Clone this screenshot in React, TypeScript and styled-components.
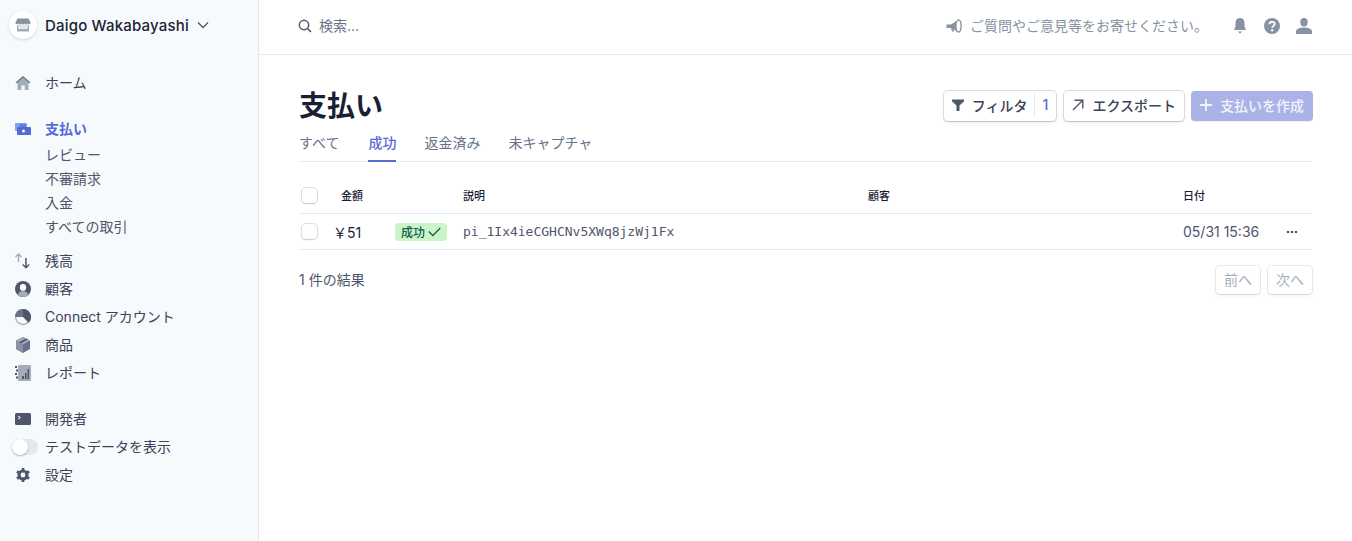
import React from "react";
import styled, { createGlobalStyle } from "styled-components";

const Global = createGlobalStyle`
  html, body { margin: 0; padding: 0; background: #fff; }
  body {
    font-family: Inter, "Noto Sans CJK JP", sans-serif;
    color: #3c4257;
    -webkit-font-smoothing: antialiased;
  }
  * { box-sizing: border-box; }
`;

const Page = styled.div`
  display: flex;
  width: 1352px;
  height: 541px;
  overflow: hidden;
`;

const Sidebar = styled.aside`
  width: 259px;
  flex: none;
  background: #f7fafc;
  border-right: 1px solid #e3e8ee;
  display: flex;
  flex-direction: column;
`;

const Account = styled.div`
  height: 50px;
  padding: 0 0 0 9px;
  display: flex;
  align-items: center;
  gap: 8px;
  font-size: 15px;
  font-weight: 500;
  letter-spacing: 0.18px;
  color: #1a1f36;
`;

const Avatar = styled.div`
  width: 28px;
  height: 28px;
  border-radius: 50%;
  background: #fff;
  box-shadow: 0 1px 3px rgba(60, 66, 87, 0.2);
  display: flex;
  align-items: center;
  justify-content: center;
`;

const Nav = styled.nav`
  display: flex;
  flex-direction: column;
  padding-top: 19px;
`;

const NavGroup = styled.div<{ $gap: number }>`
  display: flex;
  flex-direction: column;
  margin-bottom: ${(p) => p.$gap}px;
`;

const NavRow = styled.div<{ $active?: boolean }>`
  height: 28px;
  display: flex;
  align-items: center;
  font-size: 14px;
  line-height: 20px;
  font-weight: ${(p) => (p.$active ? 600 : 400)};
  color: ${(p) => (p.$active ? "#556cd6" : "#3c4257")};
`;

const IconSlot = styled.span`
  width: 45px;
  flex: none;
  padding-left: 15px;
  display: flex;
  align-items: center;
`;

const SubRow = styled.div`
  height: 24px;
  padding: 0 0 2px 45px;
  display: flex;
  align-items: center;
  font-size: 14px;
  color: #4f566b;
`;

const Toggle = styled.span`
  width: 26px;
  height: 16px;
  margin-left: 12px;
  margin-right: 7px;
  border-radius: 8px;
  background: #e3e8ee;
  position: relative;
  flex: none;
  &::before {
    content: "";
    position: absolute;
    left: 0;
    top: 0;
    width: 16px;
    height: 16px;
    border-radius: 50%;
    background: #fff;
    box-shadow: 0 1px 2px rgba(60, 66, 87, 0.4);
  }
`;

const Main = styled.main`
  flex: 1;
  min-width: 0;
  display: flex;
  flex-direction: column;
`;

const Topbar = styled.header`
  height: 55px;
  flex: none;
  border-bottom: 1px solid #e3e8ee;
  padding: 0 40px 2px 39px;
  display: flex;
  align-items: center;
  font-size: 14px;
  color: #697386;
`;

const Search = styled.div`
  display: flex;
  align-items: center;
  gap: 7px;
  flex: 1;
  color: #697386;
`;

const SearchText = styled.span`
  margin-bottom: 3px;
`;

const Feedback = styled.div`
  display: flex;
  align-items: center;
  gap: 8px;
  color: #8792a2;
  margin-right: 24px;
`;

const FeedbackText = styled.span`
  margin-bottom: 2px;
`;

const TopIcons = styled.div`
  display: flex;
  align-items: center;
  gap: 16px;
`;

const Content = styled.div`
  padding: 0 40px 0 40px;
  display: flex;
  flex-direction: column;
`;

const TitleRow = styled.div`
  display: flex;
  justify-content: space-between;
  align-items: flex-start;
  padding-top: 36px;
  height: 75px;
`;

const Title = styled.h1`
  margin: 0;
  font-size: 28px;
  line-height: 30px;
  font-weight: 700;
  color: #1a1f36;
`;

const Actions = styled.div`
  display: flex;
  gap: 7px;
  margin-right: -1px;
`;

const Button = styled.button<{ $primary?: boolean }>`
  height: 30px;
  padding: 0 ${(p) => (p.$primary ? 9 : 8)}px 2px;
  display: flex;
  align-items: center;
  gap: 8px;
  border: none;
  border-radius: 4px;
  font-family: inherit;
  font-size: 14px;
  font-weight: 500;
  background: ${(p) => (p.$primary ? "#a9b3e8" : "#fff")};
  color: ${(p) => (p.$primary ? "#f2f4fc" : "#3c4257")};
  box-shadow: ${(p) =>
    p.$primary
      ? "0 1px 1px rgba(0,0,0,.06)"
      : "0 0 0 1px rgba(60,66,87,.16), 0 1px 1px rgba(0,0,0,.1), 0 2px 5px rgba(60,66,87,.08)"};
  &:first-child {
    margin-right: 1px;
  }
`;

const FilterCount = styled.span`
  width: 14px;
  border-left: 1px solid #e3e8ee;
  padding-left: 7px;
  margin-left: -1px;
  color: #556cd6;
  line-height: 22px;
`;

const Tabs = styled.div`
  display: flex;
  gap: 28px;
  height: 32px;
  border-bottom: 1px solid #e3e8ee;
`;

const Tab = styled.div<{ $active?: boolean }>`
  height: 32px;
  line-height: 25px;
  font-size: 14px;
  font-weight: ${(p) => (p.$active ? 500 : 400)};
  color: ${(p) => (p.$active ? "#556cd6" : "#697386")};
  border-bottom: 2px solid ${(p) => (p.$active ? "#556cd6" : "transparent")};
  &:first-child {
    margin-right: 1px;
  }
`;

const Grid = `
  display: grid;
  grid-template-columns: 37px 59px 68px 405px 315px 1fr;
  align-items: center;
`;

const HeadRow = styled.div`
  ${Grid}
  height: 52px;
  padding-top: 15px;
  border-bottom: 1px solid #e3e8ee;
  font-size: 11px;
  font-weight: 500;
  color: #1a1f36;
`;

const BodyRow = styled.div`
  ${Grid}
  height: 36px;
  border-bottom: 1px solid #e3e8ee;
  font-size: 14px;
  color: #4f566b;
`;

const Check = styled.span`
  display: block;
  width: 15px;
  height: 15px;
  margin-left: 3px;
  border-radius: 4px;
  background: #fff;
  box-shadow: 0 0 0 1px rgba(60, 66, 87, 0.16), 0 1px 2px rgba(60, 66, 87, 0.16);
`;

const Amount = styled.span<{ $head?: boolean }>`
  margin-left: ${(p) => (p.$head ? 5 : -3)}px;
  color: #1a1f36;
  font-weight: ${(p) => (p.$head ? 500 : 400)};
  display: flex;
  align-items: center;
`;

const Badge = styled.span`
  display: inline-flex;
  align-items: center;
  gap: 3px;
  width: 52px;
  height: 18px;
  padding-left: 6px;
  border-radius: 4px;
  background: #cbf4c9;
  color: #0e6245;
  font-size: 12px;
  font-weight: 500;
`;

const Mono = styled.span`
  font-family: "DejaVu Sans Mono", "Liberation Mono", monospace;
  font-size: 13px;
  color: #4f566b;
`;

const DateCell = styled.span`
  display: flex;
  align-items: center;
  justify-content: space-between;
  padding-right: 14px;
`;

const Footer = styled.div`
  display: flex;
  align-items: center;
  justify-content: space-between;
  padding-top: 16px;
  font-size: 14px;
  color: #4f566b;
`;

const ResultCount = styled.span`
  margin-bottom: 2px;
`;

const Pager = styled.div`
  display: flex;
  gap: 8px;
`;

const PageButton = styled.button`
  height: 28px;
  padding: 0 8px 2px;
  border: none;
  border-radius: 4px;
  background: #fff;
  font-family: inherit;
  font-size: 14px;
  color: #a3acb9;
  box-shadow: 0 0 0 1px rgba(60, 66, 87, 0.1), 0 1px 1px rgba(0, 0, 0, 0.06), 0 2px 4px rgba(60, 66, 87, 0.06);
`;

const Glyph = ({ children, w = 16, h = 16 }: { children: React.ReactNode; w?: number; h?: number }) => (
  <svg width={w} height={h} viewBox={`0 0 ${w} ${h}`} style={{ display: "block", flex: "none" }}>
    {children}
  </svg>
);

const grey = "#8792a2";
const dark = "#4f566b";
const soft = "#a3acb9";

const HomeIcon = () => (
  <Glyph>
    <path d="M2.500 7.500 8 3l5.500 4.500V15H9.700v-4.500H6.300V15H2.500z" fill={soft} />
    <path d="M8 1 0.500 7.500l.9 1L8 3l6.600 5.500.9-1z" fill="#697386" />
  </Glyph>
);
const PaymentsIcon = () => (
  <Glyph>
    <rect x="0" y="2" width="12" height="8" rx="0.800" fill="#7fa2f2" />
    <path d="M4.500 3h6.500v3H4.500z" fill="#5f7fe0" />
    <rect x="2" y="6" width="14" height="8" rx="0.800" fill="#5469d4" />
    <circle cx="8.500" cy="10" r="1.500" fill="#f7fafc" />
  </Glyph>
);
const BalanceIcon = () => (
  <Glyph>
    <path d="M4.500 1 8 4.600 7 5.500 5.200 3.700V10H3.800V3.700L2 5.500 1 4.600z" fill={soft} transform="translate(-1 -1)" />
    <path d="M10.200 5h1.500v8l2-2 1 1-3.700 3.700L7.300 12l1-1 1.900 2z" fill={dark} />
  </Glyph>
);
const CustomerIcon = () => (
  <Glyph>
    <circle cx="8" cy="8" r="8" fill={dark} />
    <path d="M2.600 13.800C3.400 11.300 5.400 10 8 10s4.600 1.300 5.400 3.800A8 8 0 0 1 8 16a8 8 0 0 1-5.400-2.200z" fill={soft} />
    <ellipse cx="8" cy="6.400" rx="3.200" ry="3.400" fill="#f7fafc" />
  </Glyph>
);
const ConnectIcon = () => (
  <Glyph>
    <circle cx="8" cy="8" r="7.400" fill="#f7fafc" stroke={soft} strokeWidth="1.200" />
    <path d="M8 0a8 8 0 0 1 5.600 13.700L8 8z" fill={dark} />
    <path d="M8 0v8H0a8 8 0 0 1 8-8z" fill="#697386" />
  </Glyph>
);
const ProductIcon = () => (
  <Glyph>
    <path d="M8 0 15 3.500V12L8 16 1 12V3.500z" fill="#697386" />
    <path d="M1 3.500 8 0l7 3.500L8 7.500z" fill={soft} />
    <path d="M1 3.500 8 7.500V16L1 12z" fill={grey} />
    <path d="M4 5.200 11 1.500l1.800.9L6 6.300z" fill={dark} />
  </Glyph>
);
const ReportIcon = () => (
  <Glyph>
    <rect x="3" y="0" width="13" height="16" rx="1" fill={soft} />
    <path d="M0 1h2v2H0zM1 4.500h2v2H1zM0 8h2v2H0zM1 11.500h2v2H1z" fill={dark} />
    <path d="M7 11h2v3H7zM10 8h1.500v6H10zM12.500 4H14v10h-1.500z" fill={dark} />
  </Glyph>
);
const TerminalIcon = () => (
  <Glyph>
    <rect y="2" width="16" height="12" rx="1.500" fill={dark} />
    <path d="M3 5l2.500 1.500L3 8" fill="none" stroke="#f7fafc" strokeWidth="1" />
  </Glyph>
);
const GearIcon = () => (
  <Glyph>
    <circle cx="8" cy="8" r="4.200" fill="none" stroke={dark} strokeWidth="2.600" />
    <path d="M8 1v14M1.900 4.500l12.200 7M14.100 4.500l-12.200 7" stroke={dark} strokeWidth="2.600" />
    <circle cx="8" cy="8" r="2.400" fill="#f7fafc" />
  </Glyph>
);
const StoreIcon = () => (
  <Glyph>
    <path d="M2.500 1.500h11L15.500 5.500a1.500 1.500 0 0 1-3 .5 1.500 1.500 0 0 1-3 0 1.500 1.500 0 0 1-3 0 1.500 1.500 0 0 1-3 0 1.500 1.500 0 0 1-3-.5z" fill={grey} />
    <path d="M2 8h1.500v4h9V8H14v6.500H2z" fill={soft} />
    <path d="M3.500 8h9v4h-9z" fill="#e3e8ee" />
  </Glyph>
);
const Chevron = () => (
  <Glyph w={12} h={12}>
    <path d="M1 3.500 6 8.500 11 3.500" fill="none" stroke={dark} strokeWidth="1.300" />
  </Glyph>
);
const SearchIcon = () => (
  <Glyph w={14} h={14}>
    <circle cx="6" cy="6" r="4.700" fill="none" stroke={dark} strokeWidth="1.500" />
    <path d="M9.500 9.500 13 13" stroke={dark} strokeWidth="1.600" />
  </Glyph>
);
const Megaphone = () => (
  <Glyph>
    <path d="M0.500 6.500H5L12 2v12L7.500 11.200 8 13.500H6L5 10H.5z" fill={grey} />
    <ellipse cx="12.500" cy="8" rx="2.600" ry="6" fill="#fff" stroke={grey} strokeWidth="1.300" />
  </Glyph>
);
const BellIcon = () => (
  <Glyph>
    <path d="M8 0c3 0 4.500 2.300 4.500 5v3.500L14 12H2l1.500-3.500V5C3.500 2.300 5 0 8 0z" fill={grey} />
    <path d="M6 13.500h4L8 15.800z" fill={grey} />
  </Glyph>
);
const HelpIcon = () => (
  <Glyph>
    <circle cx="8" cy="8" r="8" fill={grey} />
    <path d="M5.400 6.200C5.500 4.600 6.600 3.800 8 3.800c1.500 0 2.700.9 2.700 2.200 0 1.900-2.400 1.900-2.400 3.700" fill="none" stroke="#fff" strokeWidth="1.800" />
    <circle cx="8.200" cy="12.200" r="1.200" fill="#fff" />
  </Glyph>
);
const UserIcon = () => (
  <Glyph>
    <ellipse cx="8" cy="4.200" rx="3.700" ry="4.200" fill={grey} />
    <path d="M0 16v-2.500C0 11 3.500 9.500 8 9.500s8 1.500 8 4V16z" fill={grey} />
  </Glyph>
);
const FilterIcon = () => (
  <Glyph w={12} h={12}>
    <path d="M0 .5h12v1.800L7.500 6.500V12h-3V6.500L0 2.300z" fill={dark} />
  </Glyph>
);
const ArrowIcon = () => (
  <Glyph w={12} h={12}>
    <path d="M1 11 10.500 1.500M2.500 1.200h8.300v8.300" fill="none" stroke={dark} strokeWidth="1.400" />
  </Glyph>
);
const PlusIcon = () => (
  <Glyph w={12} h={12}>
    <path d="M6 0v12M0 6h12" stroke="#f2f4fc" strokeWidth="1.800" />
  </Glyph>
);
const CheckIcon = () => (
  <Glyph w={13} h={12}>
    <path d="M.8 5.500l4 4L12.300 2" fill="none" stroke="#0e6245" strokeWidth="1.300" />
  </Glyph>
);
const Dots = () => (
  <Glyph w={12} h={4}>
    <circle cx="2" cy="2" r="1.300" fill={dark} />
    <circle cx="6" cy="2" r="1.300" fill={dark} />
    <circle cx="10" cy="2" r="1.300" fill={dark} />
  </Glyph>
);

export default function App() {
  return (
    <Page>
      <Global />
      <Sidebar>
        <Account>
          <Avatar>
            <StoreIcon />
          </Avatar>
          <span>Daigo Wakabayashi</span>
          <Chevron />
        </Account>
        <Nav>
          <NavGroup $gap={18}>
            <NavRow>
              <IconSlot><HomeIcon /></IconSlot>ホーム
            </NavRow>
          </NavGroup>
          <NavGroup $gap={8}>
            <NavRow $active>
              <IconSlot><PaymentsIcon /></IconSlot>支払い
            </NavRow>
            <SubRow>レビュー</SubRow>
            <SubRow>不審請求</SubRow>
            <SubRow>入金</SubRow>
            <SubRow>すべての取引</SubRow>
          </NavGroup>
          <NavGroup $gap={18}>
            <NavRow><IconSlot><BalanceIcon /></IconSlot>残高</NavRow>
            <NavRow><IconSlot><CustomerIcon /></IconSlot>顧客</NavRow>
            <NavRow><IconSlot><ConnectIcon /></IconSlot>Connect アカウント</NavRow>
            <NavRow><IconSlot><ProductIcon /></IconSlot>商品</NavRow>
            <NavRow><IconSlot><ReportIcon /></IconSlot>レポート</NavRow>
          </NavGroup>
          <NavGroup $gap={0}>
            <NavRow><IconSlot><TerminalIcon /></IconSlot>開発者</NavRow>
            <NavRow><Toggle />テストデータを表示</NavRow>
            <NavRow><IconSlot><GearIcon /></IconSlot>設定</NavRow>
          </NavGroup>
        </Nav>
      </Sidebar>
      <Main>
        <Topbar>
          <Search>
            <SearchIcon />
            <SearchText>検索...</SearchText>
          </Search>
          <Feedback>
            <Megaphone />
            <FeedbackText>ご質問やご意見等をお寄せください。</FeedbackText>
          </Feedback>
          <TopIcons>
            <BellIcon />
            <HelpIcon />
            <UserIcon />
          </TopIcons>
        </Topbar>
        <Content>
          <TitleRow>
            <Title>支払い</Title>
            <Actions>
              <Button>
                <FilterIcon />
                フィルタ
                <FilterCount>1</FilterCount>
              </Button>
              <Button>
                <ArrowIcon />
                エクスポート
              </Button>
              <Button $primary>
                <PlusIcon />
                支払いを作成
              </Button>
            </Actions>
          </TitleRow>
          <Tabs>
            <Tab>すべて</Tab>
            <Tab $active>成功</Tab>
            <Tab>返金済み</Tab>
            <Tab>未キャプチャ</Tab>
          </Tabs>
          <HeadRow>
            <Check />
            <Amount $head>金額</Amount>
            <span />
            <span>説明</span>
            <span>顧客</span>
            <span>日付</span>
          </HeadRow>
          <BodyRow>
            <Check />
            <Amount>￥51</Amount>
            <span><Badge>成功<CheckIcon /></Badge></span>
            <Mono>pi_1Ix4ieCGHCNv5XWq8jzWj1Fx</Mono>
            <span />
            <DateCell>05/31 15:36<Dots /></DateCell>
          </BodyRow>
          <Footer>
            <ResultCount>1 件の結果</ResultCount>
            <Pager>
              <PageButton>前へ</PageButton>
              <PageButton>次へ</PageButton>
            </Pager>
          </Footer>
        </Content>
      </Main>
    </Page>
  );
}
